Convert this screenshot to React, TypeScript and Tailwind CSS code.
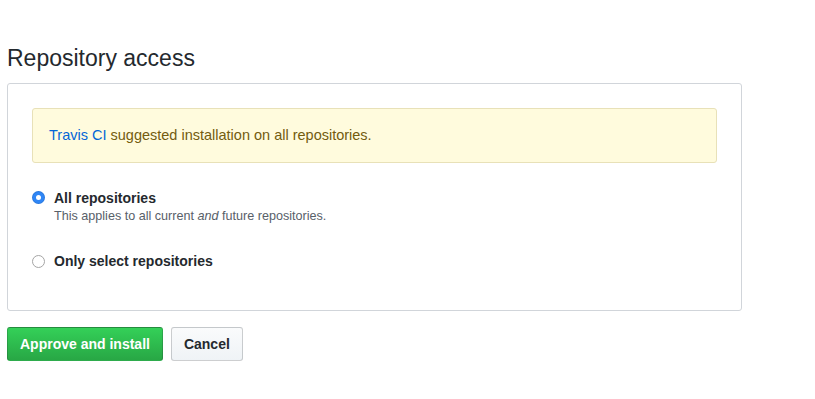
import React, { useState } from "react";

const font = { fontFamily: '"Liberation Sans", Arial, sans-serif' };

function Radio({ checked }: { checked: boolean }) {
  return checked ? (
    <span className="flex h-[13px] w-[13px] items-center justify-center rounded-full bg-[#2f86f6] shadow-[inset_0_0_0_1px_rgba(0,0,0,0.1)]">
      <span className="h-[5px] w-[5px] rounded-full bg-white" />
    </span>
  ) : (
    <span className="h-[13px] w-[13px] rounded-full border border-[#a5a5a5] bg-white" />
  );
}

export default function App() {
  const [choice, setChoice] = useState<"all" | "select">("all");

  return (
    <div className="h-[399px] w-[815px] bg-white text-[#24292e]" style={font}>
      <div className="w-[734px] pl-[7px] pt-[43px]">
        <h2 className="text-[23px] leading-[30px] font-normal">Repository access</h2>

        <div className="mt-[10px] w-[735px] rounded-[3px] border border-[#d1d5da] px-[24px] pt-[24px] pb-[39px]">
          <div className="flex h-[55px] items-center rounded-[3px] border border-[#e8e1b8] bg-[#fffbdd] px-[16px] text-[14.5px] text-[#735c0f]">
            <a href="#" className="text-[#0366d6]">Travis CI</a>
            <span>&nbsp;suggested installation on all repositories.</span>
          </div>

          <label className="mt-[25px] flex cursor-pointer items-start gap-[9px]" onClick={() => setChoice("all")}>
            <span className="mt-[3px]">
              <Radio checked={choice === "all"} />
            </span>
            <span className="flex flex-col">
              <span className="text-[14px] leading-[20px] font-bold">All repositories</span>
              <span className="text-[12.6px] leading-[16px] text-[#586069]">
                This applies to all current <em>and</em> future repositories.
              </span>
            </span>
          </label>

          <label className="mt-[27px] flex cursor-pointer items-center gap-[9px]" onClick={() => setChoice("select")}>
            <span className="flex">
              <Radio checked={choice === "select"} />
            </span>
            <span className="text-[14px] leading-[20px] font-bold">Only select repositories</span>
          </label>
        </div>

        <div className="mt-[16px] flex gap-[8px]">
          <button className="h-[34px] rounded-[3px] border border-[rgba(27,31,35,0.2)] bg-gradient-to-b from-[#34d058] to-[#28a745] px-[12px] text-[14px] font-bold text-white">
            Approve and install
          </button>
          <button className="h-[34px] rounded-[3px] border border-[rgba(27,31,35,0.2)] bg-gradient-to-b from-[#fafbfc] to-[#eff3f6] px-[12px] text-[14px] font-bold text-[#24292e]">
            Cancel
          </button>
        </div>
      </div>
    </div>
  );
}
